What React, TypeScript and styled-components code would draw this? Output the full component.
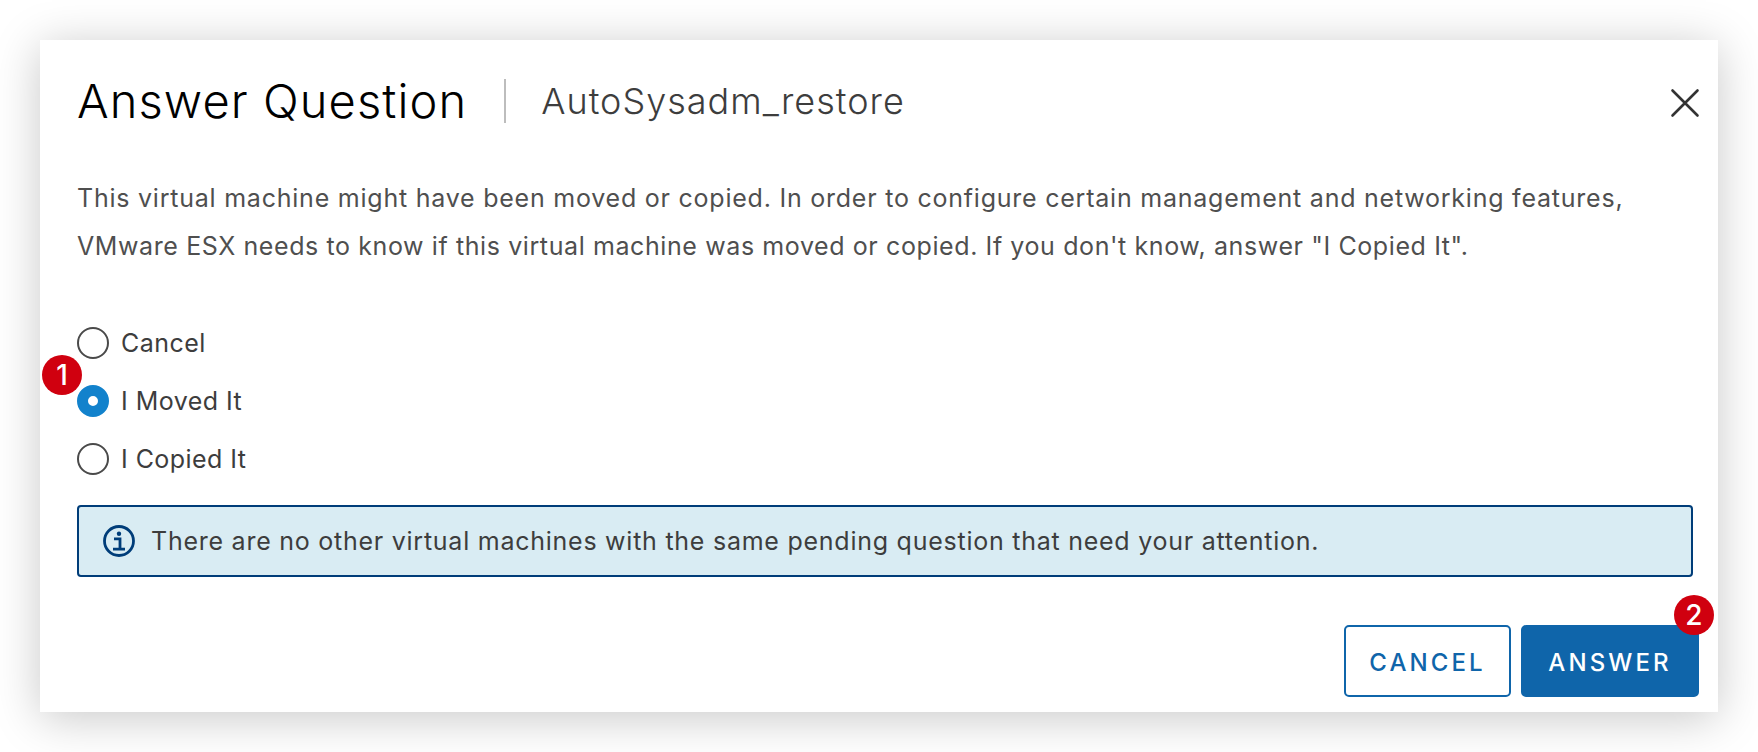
import * as React from "react";
import styled, { createGlobalStyle } from "styled-components";

const GlobalStyle = createGlobalStyle`
  html, body {
    margin: 0;
    padding: 0;
    background: #fff;
    font-family: Inter, "Liberation Sans", sans-serif;
  }
`;

const Page = styled.div`
  width: 1758px;
  height: 752px;
  padding: 40px;
  box-sizing: border-box;
  overflow: hidden;
`;

const Modal = styled.div`
  height: 672px;
  box-sizing: border-box;
  padding: 30px 25px 15px 37px;
  display: flex;
  flex-direction: column;
  background: #fff;
  box-shadow: 0 6px 44px rgba(0, 0, 0, 0.22);
`;

const Header = styled.div`
  height: 44px;
  display: flex;
  align-items: center;
  margin-top: 9px;
`;

const Title = styled.h1`
  margin: 0;
  font-size: 47px;
  font-weight: 300;
  letter-spacing: 1.1px;
  line-height: 44px;
  color: #000;
`;

const Subtitle = styled.div`
  margin-left: 37px;
  padding-left: 35px;
  border-left: 2px solid #bdbdbd;
  font-size: 36px;
  font-weight: 300;
  letter-spacing: 1px;
  line-height: 44px;
  color: #3d3d3d;
`;

const CloseButton = styled.button`
  margin-left: auto;
  margin-right: -7px;
  margin-top: 4px;
  width: 30px;
  height: 30px;
  padding: 0;
  border: 0;
  background: none;
  display: flex;
`;

const Message = styled.p`
  margin: 51px 0 0;
  font-size: 25px;
  line-height: 48px;
  color: #4f4f4f;
`;

const MessageLine = styled.span<{ $spacing: number }>`
  display: block;
  letter-spacing: ${(p) => p.$spacing}px;
`;

const Options = styled.div`
  margin-top: 57px;
  display: flex;
  flex-direction: column;
  gap: 26px;
`;

const Option = styled.label`
  position: relative;
  height: 32px;
  display: flex;
  align-items: center;
  gap: 12px;
  font-size: 25px;
  letter-spacing: 0.45px;
  color: #3d3d3d;
`;

const Radio = styled.input.attrs({ type: "radio", name: "answer" })`
  appearance: none;
  margin: 0;
  width: 32px;
  height: 32px;
  box-sizing: border-box;
  border: 2px solid #4a4a4a;
  border-radius: 50%;
  background: #fff;

  &:checked {
    border: 11px solid #1282cc;
  }
`;

const Badge = styled.span`
  position: absolute;
  width: 40px;
  height: 40px;
  border-radius: 50%;
  display: flex;
  align-items: center;
  justify-content: center;
  background: #d0000f;
  color: #fff;
  font-size: 28px;
  font-weight: 500;
  letter-spacing: 0;
`;

const OptionBadge = styled(Badge)`
  left: -35px;
  top: -30px;
`;

const Alert = styled.div`
  height: 72px;
  margin-top: 30px;
  box-sizing: border-box;
  display: flex;
  align-items: center;
  gap: 16px;
  padding-left: 24px;
  border: 2px solid #003d79;
  border-radius: 4px;
  background: #d9ecf3;
  font-size: 25px;
  letter-spacing: 0.75px;
  color: #3d3d3d;
`;

const Footer = styled.div`
  margin-top: auto;
  margin-right: -6px;
  display: flex;
  justify-content: flex-end;
  gap: 10px;
`;

const Button = styled.button<{ $primary?: boolean }>`
  position: relative;
  width: ${(p) => (p.$primary ? "178px" : "167px")};
  height: 72px;
  padding: 2px 0 0;
  border: 2px solid #0f65aa;
  border-radius: 5px;
  background: ${(p) => (p.$primary ? "#0f65aa" : "#fff")};
  color: ${(p) => (p.$primary ? "#fff" : "#0f65aa")};
  font-family: inherit;
  font-size: 24px;
  font-weight: 500;
  letter-spacing: 3.1px;
`;

const ButtonBadge = styled(Badge)`
  right: -17px;
  top: -32px;
`;

const InfoIcon = () => (
  <svg width="32" height="32" viewBox="0 0 32 32" fill="none" stroke="#003d79">
    <circle cx="16" cy="16" r="14.5" strokeWidth="2.8" />
    <circle cx="16" cy="8.8" r="2.2" fill="#003d79" stroke="none" />
    <path d="M11 13.8H17V24M10 24.2H22" strokeWidth="2.8" />
  </svg>
);

const CloseIcon = () => (
  <svg width="30" height="30" viewBox="0 0 30 30" stroke="#333" strokeWidth="2.6" strokeLinecap="round">
    <path d="M2.5 2.5L27.5 27.5M27.5 2.5L2.5 27.5" />
  </svg>
);

export default function App() {
  return (
    <Page>
      <GlobalStyle />
      <Modal>
        <Header>
          <Title>Answer Question</Title>
          <Subtitle>AutoSysadm_restore</Subtitle>
          <CloseButton>
            <CloseIcon />
          </CloseButton>
        </Header>
        <Message>
          <MessageLine $spacing={0.77}>
            This virtual machine might have been moved or copied. In order to configure certain management and networking features,
          </MessageLine>
          <MessageLine $spacing={0.6}>
            VMware ESX needs to know if this virtual machine was moved or copied. If you don't know, answer "I Copied It".
          </MessageLine>
        </Message>
        <Options>
          <Option>
            <Radio />
            Cancel
          </Option>
          <Option>
            <OptionBadge>1</OptionBadge>
            <Radio defaultChecked />
            I Moved It
          </Option>
          <Option>
            <Radio />
            I Copied It
          </Option>
        </Options>
        <Alert>
          <InfoIcon />
          There are no other virtual machines with the same pending question that need your attention.
        </Alert>
        <Footer>
          <Button>CANCEL</Button>
          <Button $primary>
            ANSWER
            <ButtonBadge>2</ButtonBadge>
          </Button>
        </Footer>
      </Modal>
    </Page>
  );
}
